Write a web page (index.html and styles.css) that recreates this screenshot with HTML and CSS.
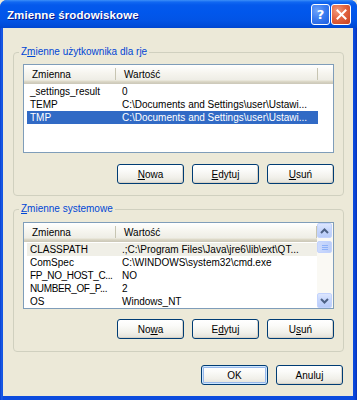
FILE: index.html
```html
<!DOCTYPE html>
<html lang="pl">
<head>
<meta charset="utf-8">
<title>Zmienne środowiskowe</title>
<link rel="stylesheet" href="styles.css">
</head>
<body>
<div class="window">
  <div class="titlebar">
    <span class="title">Zmienne środowiskowe</span>
    <div class="tbtns">
      <span class="tbtn help">?</span>
      <span class="tbtn close"><svg width="11" height="11" viewBox="0 0 11 11"><path d="M1.5 1.5 L9.5 9.5 M9.5 1.5 L1.5 9.5" stroke="#fff" stroke-width="2" stroke-linecap="square"/></svg></span>
    </div>
  </div>
  <div class="client">
    <fieldset class="group user">
      <legend>Z<u>m</u>ienne użytkownika dla rje</legend>
      <div class="list list-user">
        <div class="lmain">
          <div class="header">
            <span class="hcell c1">Zmienna</span>
            <span class="hcell c2">Wartość</span>
            <span class="hcell c3"></span>
          </div>
          <div class="row"><span class="r1">_settings_result</span><span class="r2">0</span></div>
          <div class="row"><span class="r1">TEMP</span><span class="r2">C:\Documents and Settings\user\Ustawi...</span></div>
          <div class="row sel"><span class="r1">TMP</span><span class="r2">C:\Documents and Settings\user\Ustawi...</span></div>
        </div>
      </div>
      <div class="btnrow">
        <span class="btn"><u>N</u>owa</span>
        <span class="btn"><u>E</u>dytuj</span>
        <span class="btn"><u>U</u>suń</span>
      </div>
    </fieldset>
    <fieldset class="group sys">
      <legend><u>Z</u>mienne systemowe</legend>
      <div class="list list-sys">
        <div class="lmain">
          <div class="header">
            <span class="hcell c1">Zmienna</span>
            <span class="hcell c2">Wartość</span>
          </div>
          <div class="row inact"><span class="r1">CLASSPATH</span><span class="r2">.;C:\Program Files\Java\jre6\lib\ext\QT...</span></div>
          <div class="row"><span class="r1">ComSpec</span><span class="r2">C:\WINDOWS\system32\cmd.exe</span></div>
          <div class="row"><span class="r1 tight">FP_NO_HOST_C...</span><span class="r2">NO</span></div>
          <div class="row"><span class="r1 tight">NUMBER_OF_P...</span><span class="r2">2</span></div>
          <div class="row"><span class="r1">OS</span><span class="r2">Windows_NT</span></div>
        </div>
        <div class="vscroll">
          <span class="sbtn"><svg width="9" height="6" viewBox="0 0 9 6"><path d="M1 5 L4.5 1.5 L8 5" fill="none" stroke="#4D6185" stroke-width="2"/></svg></span>
          <span class="thumb"><i></i><i></i><i></i></span>
          <span class="track"></span>
          <span class="sbtn"><svg width="9" height="6" viewBox="0 0 9 6"><path d="M1 1 L4.5 4.5 L8 1" fill="none" stroke="#4D6185" stroke-width="2"/></svg></span>
        </div>
      </div>
      <div class="btnrow">
        <span class="btn">No<u>w</u>a</span>
        <span class="btn">E<u>d</u>ytuj</span>
        <span class="btn">U<u>s</u>uń</span>
      </div>
    </fieldset>
    <div class="footer">
      <span class="btn default">OK</span>
      <span class="btn">Anuluj</span>
    </div>
  </div>
</div>
</body>
</html>
```
FILE: styles.css
```css
html, body {
  margin: 0;
  padding: 0;
  background: #ECE9D8;
}
body {
  font-family: "Liberation Sans", Arial, sans-serif;
  font-size: 10px;
  color: #000;
}
.window {
  width: 357px;
  height: 400px;
  display: flex;
  flex-direction: column;
  background: linear-gradient(to right, #0A3FD0 0, #1B5FE8 2px, #0B4BDE 3px, #0B4BDE 353px, #0A44D6 355px, #0631B8 357px);
  border-radius: 7px 7px 0 0;
  overflow: hidden;
}
.titlebar {
  height: 28px;
  flex: none;
  display: flex;
  align-items: center;
  justify-content: space-between;
  padding: 0 6px 0 7px;
  background: linear-gradient(to bottom, #3C8FF8 0, #1168F2 2px, #0459EC 5px, #0157EC 12px, #0254E6 20px, #004DDB 25px, #0046D0 28px);
}
.title {
  color: #fff;
  font-weight: bold;
  font-size: 11.5px;
  letter-spacing: 0.1px;
  text-shadow: 1px 1px 0 #0A1A8A;
  padding-top: 2px;
}
.tbtns {
  display: flex;
  gap: 1px;
  padding-top: 1px;
}
.tbtn {
  width: 17px;
  height: 19px;
  border: 1px solid #fff;
  border-radius: 3px;
  display: flex;
  align-items: center;
  justify-content: center;
  color: #fff;
  font-weight: bold;
  font-size: 13px;
  font-family: "DejaVu Sans", sans-serif;
}
.help {
  background: radial-gradient(circle at 30% 30%, #6FA3FA 0, #3C7DF0 45%, #1D5CE0 100%);
}
.close {
  width: 18px;
  background: radial-gradient(circle at 30% 30%, #F29A7C 0, #E26440 45%, #C8401E 100%);
}
.client {
  flex: 1;
  margin: 0 4px 4px 3px;
  background: #ECE9D8;
  display: flex;
  flex-direction: column;
  padding: 0 9px 0 10px;
}
.group {
  margin: 0;
  border: 1px solid #D0D0BF;
  border-radius: 4px;
  padding: 6px 9px 11px 9px;
  min-width: 0;
}
.group.user {
  margin-top: 18px;
}
.group.sys {
  margin-top: 7px;
  padding-top: 7px;
  padding-bottom: 12px;
}
.group legend {
  color: #0046D5;
  font-size: 10px;
  line-height: 12px;
  padding: 0 2px;
  margin-left: -4px;
}
.list {
  border: 1px solid #7F9DB9;
  background: #fff;
  display: flex;
  overflow: hidden;
  box-sizing: border-box;
}
.list-user {
  height: 89px;
}
.list-sys {
  height: 87px;
}
.lmain {
  flex: 1;
  min-width: 0;
}
.header {
  height: 19px;
  display: grid;
  grid-template-columns: 92px 202px 1fr;
  background: linear-gradient(to bottom, #FFFFFF 0, #F6F5EF 8px, #EEEDE5 15px, #E2DECD 16px, #D6D2C2 17px, #CBC7B8 19px);
  margin-bottom: 1px;
}
.hcell {
  padding-left: 8px;
  padding-top: 1px;
  line-height: 18px;
  background: linear-gradient(#C7C5B2, #C7C5B2) no-repeat right 3px / 1px 12px;
  color: #000;
}
.hcell.c3 {
  background: none;
}
.list-sys .header {
  grid-template-columns: 92px 1fr;
}
.row {
  display: grid;
  grid-template-columns: 89px 202px;
  width: 291px;
  margin-left: 3px;
  height: 13px;
  line-height: 13px;
  white-space: nowrap;
}
.row span {
  overflow: hidden;
}
.r1 {
  padding-left: 3px;
}
.r1.tight {
  letter-spacing: -0.35px;
}
.r2 {
  padding-left: 6px;
}
.row.sel {
  background: #316AC5;
  color: #fff;
}
.row.inact {
  background: #F0EFE7;
}
.vscroll {
  width: 15px;
  flex: none;
  display: flex;
  flex-direction: column;
  background: #FAF9F4;
  padding: 0 1px 0 0;
}
.sbtn {
  border: 1px solid #C3D3FD;
  border-radius: 2px;
  background: linear-gradient(to bottom, #DCE6FE 0, #C6D6FC 50%, #B8CBF8 100%);
  display: flex;
  align-items: center;
  justify-content: center;
  box-sizing: border-box;
  height: 15px;
}
.thumb {
  margin-top: 3px;
  height: 12px;
  border: 1px solid #C3D3FD;
  border-radius: 2px;
  background: linear-gradient(to right, #CDDBFD, #BCCEF9);
  display: flex;
  flex-direction: column;
  align-items: center;
  justify-content: center;
  gap: 1px;
  box-sizing: border-box;
}
.thumb i {
  display: block;
  width: 6px;
  height: 0;
  border-bottom: 1px solid #8CB0F8;
}
.track {
  flex: 1;
}
.btnrow {
  display: flex;
  justify-content: flex-end;
  gap: 8px;
  margin-top: 11px;
}
.group.sys .btnrow {
  margin-top: 10px;
}
.btn {
  width: 67px;
  height: 20px;
  box-sizing: border-box;
  border: 1px solid #003C74;
  border-radius: 3px;
  background: linear-gradient(to bottom, #FFFFFF 0, #FBFBF9 30%, #F1F0EA 70%, #E3E1D8 100%);
  box-shadow: inset -1px -1px 0 #D8D2C6;
  display: flex;
  align-items: center;
  justify-content: center;
  font-size: 10px;
  color: #000;
}
.btn.default {
  box-shadow: inset 0 0 0 1px #CEE7FF, inset 0 0 0 2px #98B8EA;
}
.footer {
  display: flex;
  justify-content: flex-end;
  gap: 8px;
  margin-top: 13px;
  margin-right: 1px;
}
u {
  text-decoration: underline;
  text-underline-offset: 1px;
}
```
